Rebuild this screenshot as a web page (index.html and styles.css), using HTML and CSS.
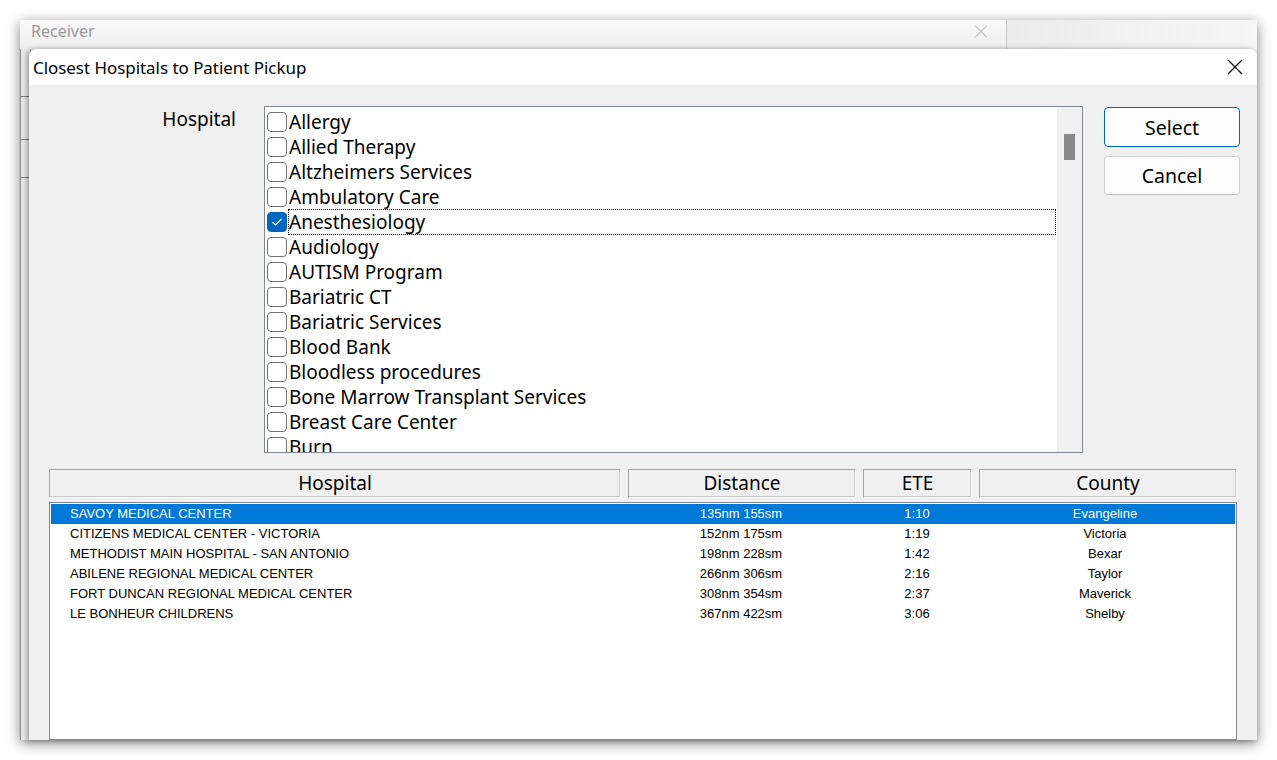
FILE: index.html
```html
<!DOCTYPE html>
<html>
<head>
<meta charset="utf-8">
<link rel="stylesheet" href="styles.css">
</head>
<body>
<div class="desktop">
  <div class="receiver">
    <div class="recv-title">
      <div class="recv-title-main">
        <span class="recv-name">Receiver</span>
        <svg class="recv-x" width="16" height="16" viewBox="0 0 16 16"><path d="M1 1L15 15M15 1L1 15" stroke="#a0a0a0" stroke-width="1.2" fill="none"/></svg>
      </div>
      <div class="recv-title-rest"></div>
    </div>
    <div class="recv-body">
      <div class="recv-strip">
        <span class="tick t1"></span>
        <span class="tick t2"></span>
        <span class="tick t3"></span>
      </div>
    </div>
  </div>

  <div class="dialog">
    <div class="dlg-title">
      <span class="dlg-name">Closest Hospitals to Patient Pickup</span>
      <svg class="dlg-x" width="16" height="16" viewBox="0 0 16 16"><path d="M1 1L15 15M15 1L1 15" stroke="#111" stroke-width="1.3" fill="none"/></svg>
    </div>
    <div class="dlg-body">
      <div class="top">
        <div class="label">Hospital</div>
        <div class="checklist">
          <div class="items">
            <div class="item"><span class="cb"></span><span class="it">Allergy</span></div>
            <div class="item"><span class="cb"></span><span class="it">Allied Therapy</span></div>
            <div class="item"><span class="cb"></span><span class="it">Altzheimers Services</span></div>
            <div class="item"><span class="cb"></span><span class="it">Ambulatory Care</span></div>
            <div class="item"><span class="cb on"><svg width="20" height="20" viewBox="0 0 20 20"><path d="M5.5 10.2L8.5 13L14.5 7" stroke="#fff" stroke-width="1.1" fill="none"/></svg></span><span class="it focus">Anesthesiology</span></div>
            <div class="item"><span class="cb"></span><span class="it">Audiology</span></div>
            <div class="item"><span class="cb"></span><span class="it">AUTISM Program</span></div>
            <div class="item"><span class="cb"></span><span class="it">Bariatric CT</span></div>
            <div class="item"><span class="cb"></span><span class="it">Bariatric Services</span></div>
            <div class="item"><span class="cb"></span><span class="it">Blood Bank</span></div>
            <div class="item"><span class="cb"></span><span class="it">Bloodless procedures</span></div>
            <div class="item"><span class="cb"></span><span class="it">Bone Marrow Transplant Services</span></div>
            <div class="item"><span class="cb"></span><span class="it">Breast Care Center</span></div>
            <div class="item"><span class="cb"></span><span class="it">Burn</span></div>
          </div>
          <div class="scrollbar"><div class="thumb"></div></div>
        </div>
        <div class="buttons">
          <button class="btn primary">Select</button>
          <button class="btn">Cancel</button>
        </div>
      </div>

      <div class="table">
        <div class="thead">
          <div class="th">Hospital</div>
          <div class="th">Distance</div>
          <div class="th">ETE</div>
          <div class="th">County</div>
        </div>
        <div class="tbody">
          <div class="row sel"><span class="c-name">SAVOY MEDICAL CENTER</span><span class="c">135nm 155sm</span><span class="c">1:10</span><span class="c">Evangeline</span></div>
          <div class="row"><span class="c-name">CITIZENS MEDICAL CENTER - VICTORIA</span><span class="c">152nm 175sm</span><span class="c">1:19</span><span class="c">Victoria</span></div>
          <div class="row"><span class="c-name">METHODIST MAIN HOSPITAL - SAN ANTONIO</span><span class="c">198nm 228sm</span><span class="c">1:42</span><span class="c">Bexar</span></div>
          <div class="row"><span class="c-name">ABILENE REGIONAL MEDICAL CENTER</span><span class="c">266nm 306sm</span><span class="c">2:16</span><span class="c">Taylor</span></div>
          <div class="row"><span class="c-name">FORT DUNCAN REGIONAL MEDICAL CENTER</span><span class="c">308nm 354sm</span><span class="c">2:37</span><span class="c">Maverick</span></div>
          <div class="row"><span class="c-name">LE BONHEUR CHILDRENS</span><span class="c">367nm 422sm</span><span class="c">3:06</span><span class="c">Shelby</span></div>
        </div>
      </div>
    </div>
  </div>
</div>
</body>
</html>
```

FILE: styles.css
```css
html, body {
  margin: 0;
  padding: 0;
  background: #ffffff;
  width: 1277px;
  height: 760px;
  overflow: hidden;
}

.desktop {
  position: relative;
  width: 1277px;
  height: 760px;
  padding: 20px;
  box-sizing: border-box;
  font-family: "Noto Sans", "Open Sans", sans-serif;
}

.receiver {
  width: 1237px;
  height: 720px;
  background: #f0f0f0;
  box-shadow: 0 3px 12px rgba(0, 0, 0, 0.5);
  display: flex;
  flex-direction: column;
}

.recv-title {
  height: 29px;
  display: flex;
  background: linear-gradient(#f9f9f9, #eeeeee);
}

.recv-title-main {
  width: 987px;
  border-right: 1px solid #c4c4c4;
  display: flex;
  align-items: flex-start;
  justify-content: space-between;
  padding: 0 17px 0 11px;
  box-sizing: border-box;
}

.recv-name {
  color: #9a9a9a;
  font-size: 16px;
  line-height: 22px;
}

.recv-x {
  width: 16px;
  height: 13px;
  margin-top: 5px;
}

.recv-title-rest {
  flex: 1;
  background: linear-gradient(90deg, #ececec, #f6f6f6);
}

.recv-body {
  flex: 1;
  display: flex;
}

.recv-strip {
  position: relative;
  width: 9px;
  border-left: 1px solid #8a8a8a;
  border-right: 1px solid #a8a8a8;
  background: #e8e8e8;
}

.tick {
  position: absolute;
  left: 0;
  width: 8px;
  height: 1px;
  background: #777;
}
.t1 { top: 47px; }
.t2 { top: 90px; }
.t3 { top: 128px; }

/* dialog */
.dialog {
  position: absolute;
  left: 29px;
  top: 49px;
  width: 1228px;
  height: 691px;
  background: #f0f0f0;
  border-top-left-radius: 8px;
  border-top-right-radius: 8px;
  box-shadow: -2px 0 5px rgba(0, 0, 0, 0.35);
  overflow: hidden;
  display: flex;
  flex-direction: column;
}

.dlg-title {
  height: 36px;
  background: #ffffff;
  display: flex;
  align-items: center;
  justify-content: space-between;
  padding: 0 14px 0 4px;
  flex: none;
}

.dlg-name {
  font-size: 16.9px;
  color: #000;
}

.dlg-x {
  width: 16px;
  height: 16px;
}

.dlg-body {
  flex: 1;
  padding: 21px 20px 0 20px;
  display: flex;
  flex-direction: column;
  min-height: 0;
}

.top {
  display: flex;
  align-items: flex-start;
  height: 347px;
  flex: none;
  margin-right: -3px;
}

.label {
  width: 215px;
  flex: none;
  padding-right: 28px;
  box-sizing: border-box;
  text-align: right;
  font-size: 19px;
  line-height: 24px;
  padding-top: 1px;
  color: #000;
}

.checklist {
  width: 819px;
  flex: none;
  height: 347px;
  border: 1px solid #828790;
  box-sizing: border-box;
  background: #ffffff;
  display: flex;
  overflow: hidden;
}

.items {
  flex: 1;
  padding: 2px 1px 0 2px;
  overflow: hidden;
}

.item {
  height: 25px;
  display: flex;
  align-items: center;
}

.cb {
  width: 20px;
  height: 20px;
  box-sizing: border-box;
  border: 1px solid #707070;
  border-radius: 4px;
  background: #fff;
  flex: none;
  margin-right: 1px;
  display: flex;
}

.cb.on {
  background: #0067c0;
  border-color: #0067c0;
}

.cb.on svg {
  margin: -1px;
}

.it {
  flex: 1;
  font-size: 19px;
  color: #000;
  white-space: nowrap;
  line-height: 24px;
  height: 26px;
  box-sizing: border-box;
  border: 1px solid transparent;
  padding-left: 0;
}

.it.focus {
  border: 1px dotted #000;
}

.scrollbar {
  width: 25px;
  background: #f0f0f0;
  position: relative;
  flex: none;
}

.thumb {
  position: absolute;
  left: 7px;
  top: 27px;
  width: 11px;
  height: 26px;
  background: #8a8a8a;
}

.buttons {
  margin-left: 21px;
  width: 136px;
  flex: none;
  display: flex;
  flex-direction: column;
  gap: 9px;
  padding-top: 1px;
}

.btn {
  font-family: "Noto Sans", "Open Sans", sans-serif;
  font-size: 19.5px;
  height: 40px;
  background: #fdfdfd;
  border: 1px solid #d0d0d0;
  border-bottom-color: #c0c0c0;
  border-radius: 4px;
  color: #000;
  padding: 0;
}

.btn.primary {
  border: 1px solid #0067c0;
}

.btn + .btn {
  height: 39px;
}

/* table */
.table {
  margin-top: 16px;
  flex: 1;
  display: flex;
  flex-direction: column;
  min-height: 0;
}

.thead {
  display: grid;
  grid-template-columns: 572px 228px 109px 258px;
  justify-content: space-between;
  height: 29px;
  flex: none;
}

.th {
  border: 1px solid #d6d6d6;
  border-top-color: #a5a5a5;
  border-left-color: #a5a5a5;
  border-right-color: #ffffff;
  border-bottom-color: #ffffff;
  box-shadow: inset -1px -1px 0 #c8c8c8;
  background: #f0f0f0;
  text-align: center;
  font-size: 19px;
  line-height: 26px;
  color: #000;
}

.tbody {
  margin-top: 4px;
  flex: 1;
  border: 1px solid #828790;
  background: #fff;
  padding: 1px;
  font-family: "Liberation Sans", Arial, sans-serif;
  font-size: 13px;
}

.row {
  display: grid;
  grid-template-columns: 576px 228px 124px 252px;
  justify-content: start;
  height: 20px;
  line-height: 18px;
  align-items: center;
  color: #000;
}

.row.sel {
  background: #0078d7;
  color: #fff;
}

.c-name {
  padding-left: 19px;
  white-space: nowrap;
}

.c {
  text-align: center;
  white-space: nowrap;
}
```
